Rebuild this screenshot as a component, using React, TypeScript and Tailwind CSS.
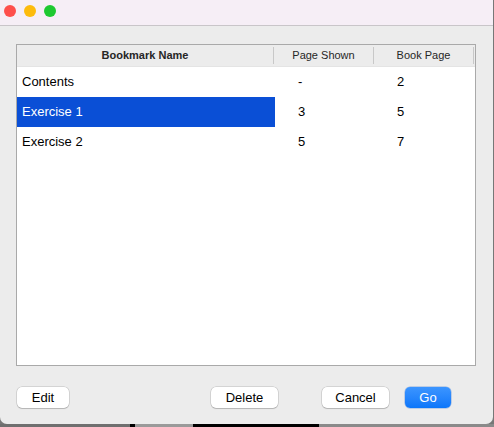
const rows = [
  { name: "Contents", shown: "-", book: "2", selected: false },
  { name: "Exercise 1", shown: "3", book: "5", selected: true },
  { name: "Exercise 2", shown: "5", book: "7", selected: false },
];

function Button({ label, className }: { label: string; className: string }) {
  return (
    <button
      className={`h-[21px] rounded-[5px] bg-white text-[13px] text-black shadow-[0_0_0_0.5px_rgba(0,0,0,0.2),0_1px_1px_rgba(0,0,0,0.15)] ${className}`}
    >
      {label}
    </button>
  );
}

export default function App() {
  return (
    <div className="w-[494px] h-[427px] bg-[#777] overflow-hidden font-['Liberation_Sans',Arial,sans-serif]">
      <div className="relative h-[424px] w-[493px] rounded-b-[7px] bg-[#ececec] flex flex-col overflow-hidden">
        <div className="h-[26px] shrink-0 bg-[#f6eef6] border-b border-[#c9c5c9] flex items-start pt-[5px] gap-[8px] pl-[4px]">
          <span className="w-[12px] h-[12px] rounded-full bg-[#fe4f4c]" />
          <span className="w-[12px] h-[12px] rounded-full bg-[#fdbb0c]" />
          <span className="w-[12px] h-[12px] rounded-full bg-[#1ec930]" />
        </div>

        <div className="mt-[18px] ml-[16px] w-[460px] h-[322px] border border-[#a9a9a9] bg-white flex flex-col">
          <div className="h-[22px] shrink-0 bg-[#ececec] flex text-[11px] text-[#262626] border-b border-[#e4e4e4]">
            <div className="w-[257px] flex items-center justify-center font-bold border-r border-[#c8c8c8] my-[2px]">
              Bookmark Name
            </div>
            <div className="w-[100px] flex items-center justify-center border-r border-[#c8c8c8] my-[2px]">
              Page Shown
            </div>
            <div className="w-[100px] flex items-center justify-center border-r border-[#c8c8c8] my-[2px]">
              Book Page
            </div>
          </div>
          {rows.map((r) => (
            <div key={r.name} className="h-[30px] flex items-center text-[13px] text-black">
              <div
                className={`w-[258px] h-full flex items-center pl-[5px] ${
                  r.selected ? "bg-[#0a4fd6] text-white" : ""
                }`}
              >
                {r.name}
              </div>
              <div className="w-[100px] pl-[23px]">{r.shown}</div>
              <div className="w-[100px] pl-[22px]">{r.book}</div>
            </div>
          ))}
        </div>

        <div className="mt-[21px] flex items-center pl-[17px]">
          <Button label="Edit" className="w-[52px]" />
          <Button label="Delete" className="w-[67px] ml-[142px]" />
          <Button label="Cancel" className="w-[67px] ml-[44px]" />
          <button className="ml-[16px] h-[21px] w-[46px] rounded-[5px] bg-gradient-to-b from-[#3b95ff] to-[#0a76fa] text-[13px] text-white shadow-[0_0_0_0.5px_rgba(0,80,200,0.4)]">
            Go
          </button>
        </div>
      </div>
      <div className="flex h-[3px]">
        <div className="w-[130px] bg-[#6f6f6f]" />
        <div className="w-[5px] bg-black" />
        <div className="w-[58px] bg-[#9a9a9a]" />
        <div className="w-[126px] bg-black" />
        <div className="flex-1 bg-[#8a8a8a]" />
      </div>
    </div>
  );
}
